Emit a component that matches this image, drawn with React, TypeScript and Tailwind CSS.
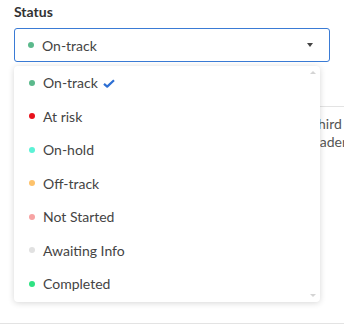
import React from "react";

const options = [
  { label: "On-track", dot: "bg-[#5bb98c]", selected: true },
  { label: "At risk", dot: "bg-[#e8111b]" },
  { label: "On-hold", dot: "bg-[#5cf2d6]" },
  { label: "Off-track", dot: "bg-[#fdc26b]" },
  { label: "Not Started", dot: "bg-[#f7a3a3]" },
  { label: "Awaiting Info", dot: "bg-[#e1e1e1]" },
  { label: "Completed", dot: "bg-[#2fe283]" },
];

function Check() {
  return (
    <svg width="12" height="9" viewBox="0 0 12 9" className="ml-[5px] mt-[2px]">
      <path d="M1 4.8 L4.2 7.6 L11 1.2" fill="none" stroke="#2d6fd4" strokeWidth="2.2" strokeLinejoin="round" />
    </svg>
  );
}

export default function App() {
  return (
    <div className="relative h-[326px] w-[344px] overflow-hidden bg-white font-['Lato',sans-serif] text-[#444]">
      <div className="px-[14px] pt-[3px]">
        <div className="text-[14px] font-bold text-[#333] leading-[18px]">Status</div>
        <div className="mt-[7px] flex h-[34px] items-center rounded-[3px] border border-[#3a7bd5] pl-[13px] pr-[16px]">
          <span className="h-1.5 w-1.5 rounded-full bg-[#5bb98c]" />
          <span className="ml-2 text-[14px]">On-track</span>
          <span className="ml-auto h-0 w-0 border-x-[3.5px] border-t-[4px] border-x-transparent border-t-[#444]" />
        </div>
      </div>

      <div className="mt-[44px] ml-[290px] border-t border-[#e3e3e3] pt-[8px] text-[14px] leading-[18px] text-[#555] whitespace-nowrap">
        <div className="ml-[23px]">third</div>
        <div className="ml-[19px]">leader</div>
      </div>
      <div className="absolute left-0 right-0 top-[323px] border-t border-[#e3e3e3]" />

      <div className="absolute left-[14px] top-[66px] w-[306px] h-[236px] rounded-[4px] bg-white shadow-[0_1px_6px_rgba(0,0,0,0.16)]">
        {options.map((o) => (
          <div key={o.label} className="flex h-[33.5px] items-center pl-[15px] text-[14px]">
            <span className={`h-1.5 w-1.5 rounded-full ${o.dot}`} />
            <span className="ml-2">{o.label}</span>
            {o.selected && <Check />}
          </div>
        ))}
        <span className="absolute right-[4px] top-[5px] h-0 w-0 border-x-[3px] border-b-[3px] border-x-transparent border-b-[#d4d4d4]" />
        <span className="absolute right-[4px] bottom-[5px] h-0 w-0 border-x-[3px] border-t-[3px] border-x-transparent border-t-[#d4d4d4]" />
      </div>
    </div>
  );
}
